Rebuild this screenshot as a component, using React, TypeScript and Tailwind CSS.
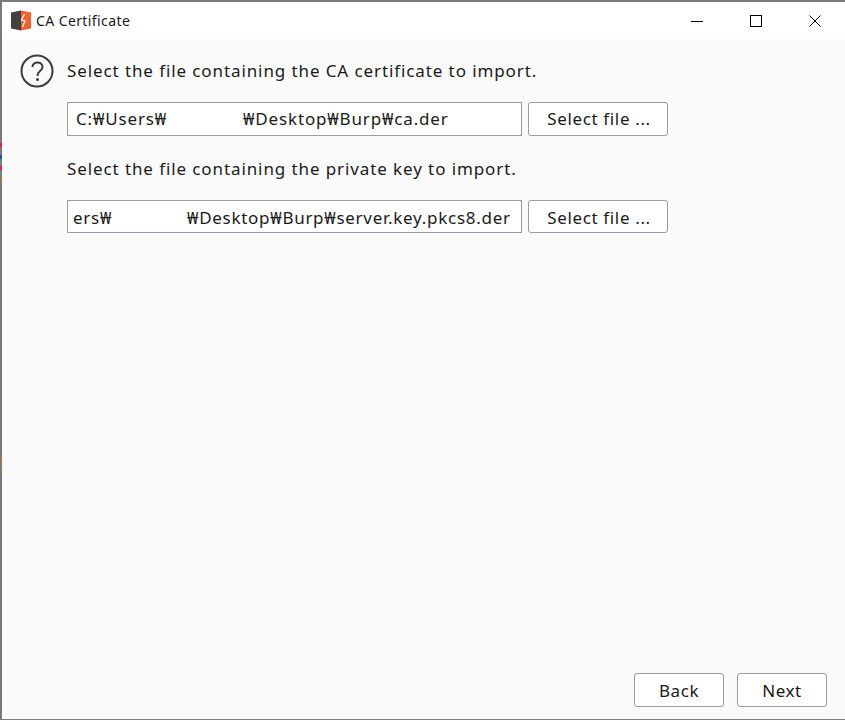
import type { ReactNode } from 'react';

const fontStack = { fontFamily: '"Noto Sans", "Noto Sans CJK KR", sans-serif' };

// leftover pixels of the window behind, showing through on the left edge
const edgeSpecks = [
  { y: 143, h: 4, color: '#d8263c' },
  { y: 155, h: 4, color: '#1f4fa0' },
  { y: 166, h: 4, color: '#d8263c' },
  { y: 176, h: 2, color: '#a5762a' },
  { y: 458, h: 3, color: '#a5762a' },
  { y: 469, h: 2, color: '#a5762a' },
];

function BurpLogo() {
  return (
    <svg width="21" height="21" viewBox="0 0 21 21" className="mr-[4px]">
      <path d="M0 2.5 L10 0.5 V20.5 L0 18.5 Z" fill="#414141" />
      <path d="M10 0.5 L20 2.5 V18.5 L10 20.5 Z" fill="#f0612d" />
      <path d="M13.5 4 L10.5 10 L14 11 L11.5 17" fill="none" stroke="#ffffff" strokeWidth="1.2" />
    </svg>
  );
}

function HelpIcon() {
  return (
    <svg width="34" height="34" viewBox="0 0 34 34" className="shrink-0">
      <circle cx="17" cy="17" r="15.5" fill="none" stroke="#3c3c3c" strokeWidth="2" />
      <path d="M12.5 13 C12.5 7 22.5 7 22.5 13 C22.5 17 17.5 16.5 17.5 22" fill="none" stroke="#3c3c3c" strokeWidth="2" />
      <circle cx="17.5" cy="25.5" r="1.5" fill="#3c3c3c" />
    </svg>
  );
}

function FileRow({ children, className, height, buttonClass }: { children: ReactNode; className: string; height: string; buttonClass: string }) {
  return (
    <div className={`flex gap-[6px] ${height}`}>
      <div className={`w-[455px] bg-white border border-[#9a9aa8] flex items-center text-[17px] text-[#1a1a1a] whitespace-pre overflow-hidden ${className}`}>
        {children}
      </div>
      <button className={`w-[140px] pl-[2px] bg-white border border-[#9a9aa8] rounded-[3px] text-[17px] tracking-[0.65px] text-[#1a1a1a] ${buttonClass}`}>
        Select file ...
      </button>
    </div>
  );
}

export default function App() {
  return (
    <div className="relative w-[845px] h-[720px] flex flex-col bg-[#fafafa] border-t-2 border-l-2 border-b border-[#7a7a7a]" style={fontStack}>
      {edgeSpecks.map((s) => (
        <div
          key={s.y}
          className="absolute left-[-2px] w-[2px]"
          style={{ top: s.y - 2, height: s.h, backgroundColor: s.color }}
        />
      ))}

      <div className="h-[37px] bg-white flex items-center shrink-0 pl-[9px]">
        <BurpLogo />
        <span className="text-[14px] tracking-[0.4px] text-[#1a1a1a]">CA Certificate</span>
        <div className="ml-auto flex items-center pr-[24px] gap-[47px]">
          <svg width="12" height="12" viewBox="0 0 12 12"><path d="M0 6.5 H12" stroke="#000" strokeWidth="1" /></svg>
          <svg width="12" height="12" viewBox="0 0 12 12"><rect x="0.5" y="0.5" width="11" height="11" fill="none" stroke="#000" strokeWidth="1" /></svg>
          <svg width="12" height="12" viewBox="0 0 12 12"><path d="M0.5 0.5 L11.5 11.5 M11.5 0.5 L0.5 11.5" stroke="#000" strokeWidth="1" /></svg>
        </div>
      </div>

      <div className="flex-1 flex flex-col pl-[18px] pr-[18px]">
        <div className="flex gap-[13px] pt-[15px] flex-1">
          <HelpIcon />
          <div className="flex flex-col">
            <div className="h-[33px] flex items-center text-[17px] tracking-[0.9px] text-[#1a1a1a] whitespace-nowrap">
              Select the file containing the CA certificate to import.
            </div>
            <div className="mt-[15px]">
              <FileRow className="pl-[8px] tracking-[0.85px]" height="h-[34px]" buttonClass="">
                C:₩Users₩<span className="inline-block w-[76px]" />₩Desktop₩Burp₩ca.der
              </FileRow>
            </div>
            <div className="h-[33px] mt-[16px] flex items-center text-[17px] tracking-[0.9px] text-[#1a1a1a] whitespace-nowrap">
              Select the file containing the private key to import.
            </div>
            <div className="mt-[15px]">
              <FileRow className="pl-[5px] pt-[2px] tracking-[0.72px]" height="h-[33px]" buttonClass="pt-[2px]">
                ers₩<span className="inline-block w-[75px]" />₩Desktop₩Burp₩server.key.pkcs8.der
              </FileRow>
            </div>
          </div>
        </div>
        <div className="flex justify-end gap-[13px] pb-[12px]">
          <button className="w-[90px] h-[34px] pt-[1px] bg-white border border-[#9a9aa8] rounded-[3px] text-[17px] tracking-[0.6px] text-[#1a1a1a]">Back</button>
          <button className="w-[90px] h-[34px] pt-[1px] bg-white border border-[#9a9aa8] rounded-[3px] text-[17px] tracking-[0.6px] text-[#1a1a1a]">Next</button>
        </div>
      </div>
    </div>
  );
}
